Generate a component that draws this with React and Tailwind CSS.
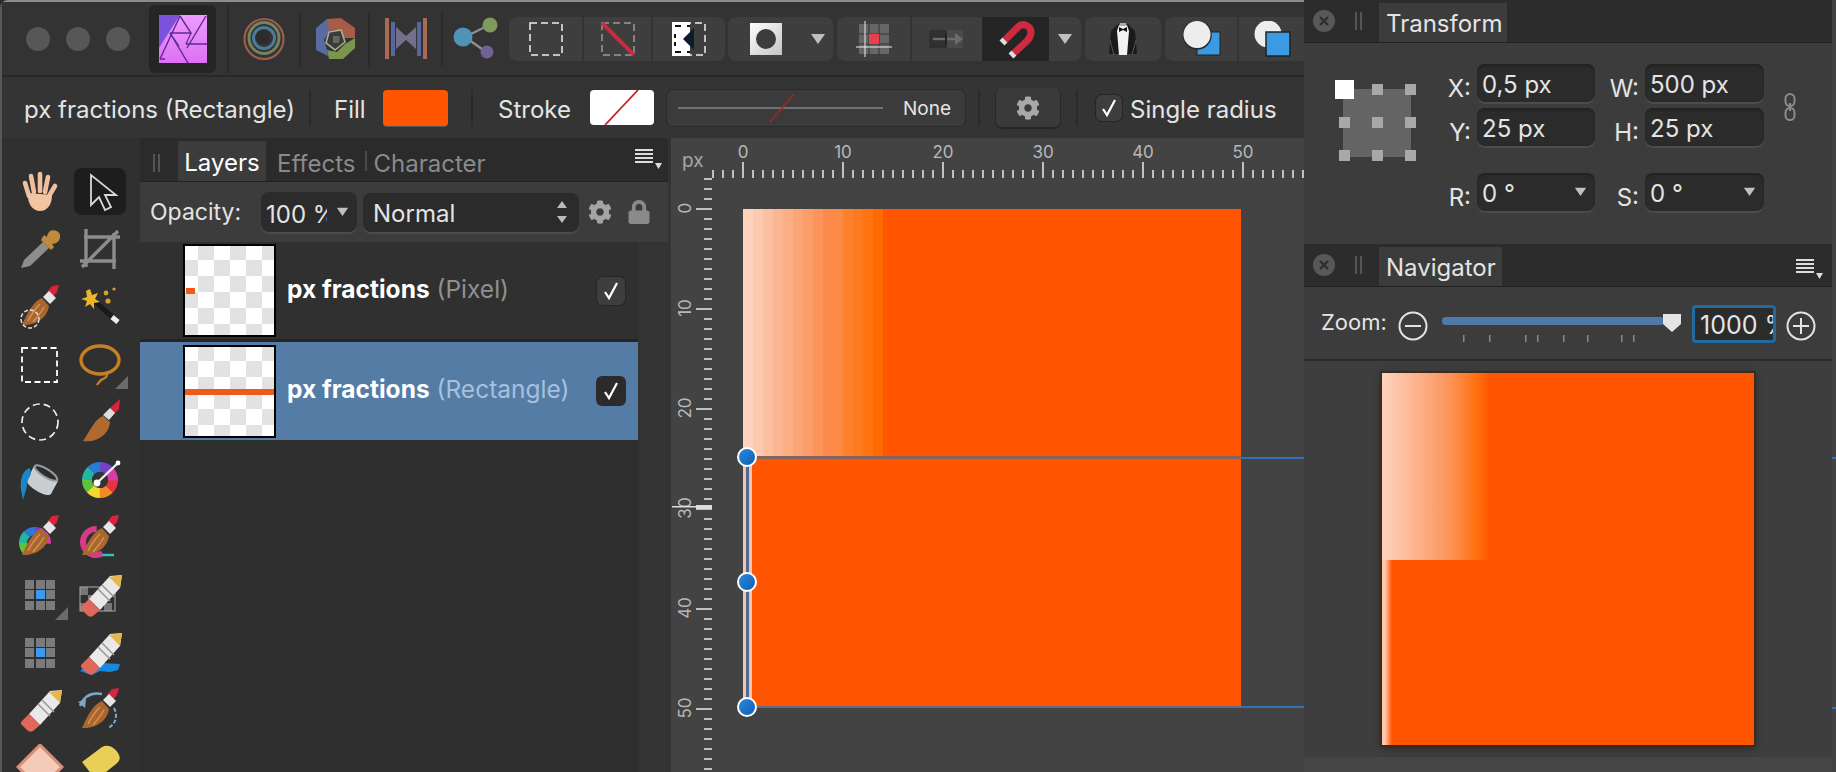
import { FaCog, FaLock } from "react-icons/fa";

const stripes = [
  "bg-[#fdd3bd]", "bg-[#fdcab0]", "bg-[#fcc0a0]", "bg-[#fcb591]", "bg-[#fcae85]",
  "bg-[#fca678]", "bg-[#fd9d69]", "bg-[#fd9459]", "bg-[#fd8a4c]", "bg-[#fd8a45]",
  "bg-[#fe7f2c]", "bg-[#ff7a1f]", "bg-[#ff7310]", "bg-[#ff6a00]",
];
const wheel = ["#e8343c", "#f08a24", "#f2d92e", "#5fc23c", "#23b5a0", "#2a78d8", "#7a3fc8", "#d63ca8"];

function Tri({ className = "", w = 16 }) {
  return (
    <svg width={w} height={w * 0.75} viewBox="0 0 16 12" className={className}>
      <path d="M1 1h14L8 11z" fill="#c0c0c0" />
    </svg>
  );
}

function Sep({ className = "" }) {
  return <div className={"w-[2px] bg-[#2a2a2a] " + className} />;
}

function Check() {
  return (
    <svg width="18" height="20" viewBox="0 0 18 20">
      <path d="M3 11l4 6L15 2" fill="none" stroke="#fff" strokeWidth="2.2" />
    </svg>
  );
}

function MenuIcon() {
  return (
    <svg width="27" height="22" viewBox="0 0 27 22">
      <path d="M0 2h18M0 6h18M0 10h18M0 14h18" stroke="#ddd" strokeWidth="1.8" />
      <path d="M20 15h7l-3.5 6z" fill="#ddd" />
    </svg>
  );
}

function CloseDot() {
  return (
    <svg width="22" height="22" viewBox="0 0 22 22">
      <circle cx="11" cy="11" r="11" fill="#585858" />
      <path d="M7 7l8 8M15 7l-8 8" stroke="#2e2e2e" strokeWidth="2.4" />
    </svg>
  );
}

function Grip() {
  return (
    <svg width="8" height="18" viewBox="0 0 8 18">
      <path d="M1 0v18M6 0v18" stroke="#555" strokeWidth="2" />
    </svg>
  );
}

// ---- toolbar icons ----
function AffinityLogo() {
  return (
    <svg width="48" height="48" viewBox="0 0 48 48">
      <defs>
        <linearGradient id="aff" x1="0" y1="0" x2="0" y2="1">
          <stop offset="0" stopColor="#ef9bff" />
          <stop offset="1" stopColor="#dd70f2" />
        </linearGradient>
      </defs>
      <rect width="48" height="48" fill="url(#aff)" />
      <path d="M0 0h21L0 33z" fill="#7b52dc" />
      <path d="M21 1L1 44M21 1l11 17H11M47 1L28 33M27 29h21M11 18l18 30M1 44h5" fill="none" stroke="#5d2a96" strokeWidth="1.4" />
      <path d="M32 18l-5 11M11 18l9 13" fill="none" stroke="#5d2a96" strokeWidth="1.2" />
    </svg>
  );
}

function RingsIcon() {
  return (
    <svg width="44" height="44" viewBox="0 0 44 44" fill="none">
      <ellipse cx="22" cy="22" rx="19.5" ry="20" stroke="#9c5c48" strokeWidth="2.2" />
      <ellipse cx="22" cy="21" rx="15" ry="15.5" stroke="#75845e" strokeWidth="3" />
      <circle cx="22" cy="21" r="10.5" stroke="#4a7c9a" strokeWidth="3" />
      <circle cx="21" cy="20" r="7" fill="#2c2c2c" />
    </svg>
  );
}

function HexIcon() {
  return (
    <svg width="44" height="44" viewBox="0 0 44 44">
      <path d="M14 2l14-1 14 10v10l-12 0-8-8-10 2z" fill="#a85c48" />
      <path d="M3 11l11-9 2 13-5 8 3 10 1 6-12-6z" fill="#586ca2" />
      <path d="M42 21v10L30 42 16 42l-2-9 10 2 8-8z" fill="#7a954e" />
      <path d="M16 15l12-2 4 12-10 8-9-7z" fill="#3a3a3a" stroke="#a9ad92" strokeWidth="1.6" />
      <path d="M20 19l7 0-1 7-6 0z" fill="#606a60" />
    </svg>
  );
}

function PersonaIcon() {
  return (
    <svg width="44" height="42" viewBox="0 0 44 42">
      <rect x="1" y="0" width="4" height="41" fill="#a86a54" />
      <rect x="7" y="4" width="4" height="34" fill="#56669e" />
      <path d="M12 9l10 9 10-9v22l-10-9-10 9z" fill="#72708a" />
      <rect x="33" y="4" width="4" height="34" fill="#56669e" />
      <rect x="39" y="0" width="4" height="41" fill="#a86a54" />
    </svg>
  );
}

function ShareIcon() {
  return (
    <svg width="46" height="44" viewBox="0 0 46 44">
      <path d="M12 20L36 8M12 20l24 17" stroke="#8f8f8f" strokeWidth="2.4" />
      <circle cx="10" cy="20" r="9.5" fill="#4f94b8" />
      <circle cx="37" cy="8" r="7.5" fill="#7f9a5c" />
      <circle cx="34" cy="35" r="6.5" fill="#6f6296" />
    </svg>
  );
}

function Marquee() {
  return (
    <svg width="34" height="34" viewBox="0 0 34 34">
      <rect x="1" y="1" width="32" height="32" fill="none" stroke="#eee" strokeWidth="1.5" strokeDasharray="7 4" />
    </svg>
  );
}

function MarqueeStroke() {
  return (
    <svg width="34" height="34" viewBox="0 0 34 34">
      <rect x="1" y="1" width="32" height="32" fill="none" stroke="#9a9a9a" strokeWidth="1.5" strokeDasharray="7 4" />
      <path d="M1 1l32 32" stroke="#d0283e" strokeWidth="4" />
    </svg>
  );
}

function MarqueeMask() {
  return (
    <svg width="34" height="34" viewBox="0 0 34 34">
      <rect x="1" y="1" width="32" height="32" fill="none" stroke="#eee" strokeWidth="1.5" strokeDasharray="7 4" />
      <path d="M0 0h18v34H0z" fill="#fff" />
      <path d="M22 6L11 17l11 11z" fill="#0e1a30" />
      <path d="M3 4h6M3 30h6M15 4h3M15 30h3M3 12v4M3 20v4" stroke="#111" strokeWidth="2" />
    </svg>
  );
}

function HoleIcon() {
  return <div className="flex h-[32px] w-[32px] items-center justify-center bg-[linear-gradient(135deg,#fff,#c4c4c4)]"><div className="h-[20px] w-[20px] rounded-full bg-[#3c3c3c]" /></div>;
}

function SnapGrid() {
  return (
    <svg width="36" height="36" viewBox="0 0 36 36">
      <path d="M3 3h30v30H3z" fill="#666" />
      <path d="M13 3v30M23 3v30M3 13h30M3 23h30" stroke="#444" strokeWidth="1.5" />
      <rect x="13" y="13" width="10" height="10" fill="#e8404a" />
      <path d="M9 0v36M0 26h36" stroke="#eee" strokeWidth="1" />
    </svg>
  );
}

function ArrowBox() {
  return (
    <svg width="36" height="18" viewBox="0 0 36 18">
      <rect width="18" height="18" fill="#303030" />
      <rect x="18" width="16" height="18" fill="#4a4a4a" />
      <path d="M4 9h24" stroke="#6c6c6c" strokeWidth="2.4" />
      <path d="M26 3l8 6-8 6z" fill="#6c6c6c" />
      <path d="M17 3v12" stroke="#222" strokeWidth="2" />
    </svg>
  );
}

function Magnet() {
  return (
    <svg width="67" height="44" viewBox="0 0 67 44" fill="none">
      <path d="M23 23L36 10C41 5 49 9 49 15C49 19 47 22 45 24L32 36" stroke="#cf2a40" strokeWidth="7" />
      <path d="M20 26l3-3M29 39l3-3" stroke="#ddd" strokeWidth="7" />
    </svg>
  );
}

function Tux() {
  return (
    <svg width="30" height="34" viewBox="0 0 30 34">
      <path d="M10 2L3 9 1 32h28L27 9 20 2z" fill="#1a1a1a" />
      <path d="M11 3h8l2 6-2 24h-8L9 9z" fill="#f2f2f2" />
      <path d="M11 5l4 2 4-2v5l-4-2-4 2z" fill="#111" />
      <path d="M12 1h6l1 3h-8z" fill="#aaa" />
      <path d="M2 18l4 15M28 18l-4 15" stroke="#555" strokeWidth="1" />
    </svg>
  );
}

function ShapeBehind() {
  return (
    <svg width="46" height="36" viewBox="0 0 46 36">
      <rect x="14" y="11" width="23" height="23" fill="#3a9ae2" stroke="#222" strokeWidth="1" />
      <circle cx="14" cy="14" r="14" fill="none" stroke="#2a2a2a" strokeWidth="1.5" />
      <circle cx="14" cy="13.5" r="13.5" fill="#ededed" />
    </svg>
  );
}

function ShapeFront() {
  return (
    <svg width="46" height="36" viewBox="0 0 46 36">
      <circle cx="14" cy="13" r="13.5" fill="#ededed" />
      <rect x="12" y="11" width="24" height="24" fill="#3a9ae2" stroke="#222" strokeWidth="1.5" />
    </svg>
  );
}

// ---- tool icons, all drawn on a 48 box ----
function Bristles({ shade = "#a9662f" }) {
  return (
    <>
      <path d="M36 3l7-1-2 7-5 6-5-6z" fill="#d8243c" />
      <path d="M27 14l6-6 7 7-6 6z" fill="#e6e6e6" />
      <path d="M26 15C18 18 12 28 6 42C18 43 31 36 33 23z" fill={shade} />
      <path d="M24 21C19 26 15 32 12 38M28 24C25 30 20 35 17 39" stroke="#d8954f" strokeWidth="1.4" fill="none" />
    </>
  );
}

function Ico({ children }) {
  return <svg width="48" height="48" viewBox="0 0 48 48" fill="none">{children}</svg>;
}

function WheelArc({ r, width, cx = 24, cy = 24, skip = 0 }) {
  const c = 2 * Math.PI * r;
  const seg = c / wheel.length;
  return wheel.slice(skip).map((col, i) => (
    <circle key={col} cx={cx} cy={cy} r={r} stroke={col} strokeWidth={width} strokeDasharray={`${seg + 0.6} ${c - seg - 0.6}`} strokeDashoffset={-(i + skip) * seg} />
  ));
}

function ToolGrid() {
  const cells = [0, 1, 2, 3, 4, 5, 6, 7, 8];
  return (
    <div className="grid grid-cols-3 gap-[1.5px]">
      {cells.map((c) => <div key={c} className={c === 4 ? "h-[9px] w-[9px] bg-[#3a9af0]" : "h-[9px] w-[9px] bg-[#7a7a7a]"} />)}
    </div>
  );
}

function Eraser() {
  return (
    <>
      <path d="M13 28L34 5l12-1-2 13-20 22z" fill="#e9e9e9" />
      <path d="M33 6l13-2-2 13z" fill="#e8b64c" />
      <path d="M22 18l12 12M26 14l12 12" stroke="#9a9a9a" strokeWidth="1.6" />
      <path d="M5 36l8-8 11 11-7 6c-2 1-4 1-6-1l-6-6z" fill="#e0685a" />
    </>
  );
}

const tools = [
  { k: "hand", n: <Ico><path d="M13 28L9 15M18 24l-3-16M24 23V6M29 24l3-15M33 28l6-10" stroke="#f0c09e" strokeWidth="4.6" strokeLinecap="round" /><path d="M12 25l24 2c0 10-5 16-12 16s-13-7-12-18z" fill="#f3c4a2" /></Ico> },
  { k: "move", sel: true, n: <Ico><path d="M15 7v30l8-8 6 13 6-3-6-12h11z" fill="#1c1c1c" stroke="#d8d8d8" strokeWidth="1.8" /></Ico> },
  { k: "pick", n: <Ico><path d="M5 43l3-8 19-18 6 6-19 18z" fill="#8d8d8d" /><path d="M25 15l10 10 3-3-2-3c5 0 9-4 8-9-1-4-6-6-10-4-2 2-3 4-3 6l-3-2z" fill="#c08a3c" /></Ico> },
  { k: "crop", n: <Ico><path d="M10 4v38M4 36h36M38 44V8M44 12H8M6 42L42 6" stroke="#8c8c8c" strokeWidth="3.4" /></Ico> },
  { k: "b1", n: <Ico><Bristles /><circle cx="14" cy="36" r="9" stroke="#ddd" strokeWidth="1.5" strokeDasharray="4 2" /></Ico> },
  { k: "wand", n: <Ico><path d="M17 17l24 21" stroke="#1a1a1a" strokeWidth="5" /><path d="M36 34l6 5" stroke="#eee" strokeWidth="5" /><path d="M14 6l2 6 6-2-3 6 5 3-6 1 0 6-4-5-5 3 2-6-6-2 6-2-1-6z" fill="#f0b428" /><circle cx="30" cy="10" r="2.4" fill="#d8a030" /><circle cx="38" cy="6" r="1.6" fill="#d8a030" /><circle cx="32" cy="18" r="2.6" fill="#d8a030" /></Ico> },
  { k: "rect", n: <Ico><rect x="6" y="7" width="35" height="34" stroke="#fff" strokeWidth="1.8" strokeDasharray="6 3.5" /></Ico> },
  { k: "lasso", tri: true, n: <Ico><ellipse cx="24" cy="19" rx="19" ry="14" stroke="#c77f24" strokeWidth="3.4" /><path d="M31 32c1 6-5 5-7 8-1 2-2 2-3 4" stroke="#c77f24" strokeWidth="2.4" /></Ico> },
  { k: "oval", n: <Ico><circle cx="24" cy="24" r="18" stroke="#eee" strokeWidth="1.7" strokeDasharray="7 4" /></Ico> },
  { k: "b2", n: <Ico><path d="M34 10l10-9-1 10-8 8z" fill="#d8243c" /><path d="M27 17l7-7 5 5-6 7z" fill="#ddd" /><path d="M27 18c-8 3-12 13-20 25 13 2 26-6 27-19z" fill="#b06a30" /></Ico> },
  { k: "fill", n: <Ico><path d="M18 10l24 15-7 13c-3 5-26-8-24-14z" fill="#c8ced2" /><ellipse cx="30" cy="17" rx="4" ry="13" transform="rotate(-58 30 17)" fill="#2c2c2c" stroke="#999" strokeWidth="2" /><path d="M14 12C6 14 4 24 5 34l2 10 3-10 2-10 3-6z" fill="#1a86c8" /></Ico> },
  { k: "wheel", n: <Ico><WheelArc r={13} width={10} /><circle cx="24" cy="24" r="8" fill="#333" /><path d="M22 26L42 7" stroke="#eee" strokeWidth="2.4" /><circle cx="21" cy="27" r="3.4" fill="#fff" /><circle cx="42" cy="7" r="2.4" fill="#fff" /></Ico> },
  { k: "cb1", n: <Ico><WheelArc r={12} width={8} cx={19} cy={30} skip={3} /><Bristles /></Ico> },
  { k: "cb2", n: <Ico><circle cx="20" cy="29" r="13" stroke="#d83a8a" strokeWidth="6" strokeDasharray="48 40" transform="rotate(60 20 29)" /><path d="M26 42h12" stroke="#35c0c8" strokeWidth="2.4" /><Bristles /></Ico> },
  { k: "g1", tri: true, tri2: true, n: <ToolGrid /> },
  { k: "e1", n: <Ico><path d="M4 16h8v8H4zM20 24h8v8h-8zM4 32h8v8H4zM12 24h8v8h-8zM28 32h8v8h-8z" fill="#777" /><rect x="4" y="16" width="35" height="24" stroke="#aaa" strokeWidth="1" /><Eraser /></Ico> },
  { k: "g2", n: <ToolGrid /> },
  { k: "e2", n: <Ico><path d="M4 42l6-6 8 1 8-3 18 1-2 6-8 2-10-1-8 4z" fill="#168ae0" /><Eraser /></Ico> },
  { k: "e3", n: <Ico><Eraser /></Ico> },
  { k: "b3", n: <Ico><path d="M4 20C8 10 16 6 26 8" stroke="#7fa6c8" strokeWidth="2.4" /><path d="M2 16l8-3-1 9z" fill="#7fa6c8" /><path d="M38 22c4 8 2 16-6 20" stroke="#7fa6c8" strokeWidth="2" strokeDasharray="4 2" /><Bristles /></Ico> },
  { k: "dia", n: <Ico><path d="M24 1L46 23 24 45 2 23z" fill="#f3cbb8" stroke="#d89078" strokeWidth="3" /></Ico> },
  { k: "sp", n: <Ico><path d="M6 18L26 3c6-3 12 0 16 6 3 5 2 8-2 11L20 36z" fill="#e8cf58" /></Ico> },
];

function ToolCell({ t }) {
  return (
    <div className="relative flex h-[57.6px] w-[60px] items-center justify-center">
      {t.sel && <div className="absolute left-[4px] top-[5px] h-[47px] w-[52px] rounded-lg bg-[#1d1d1d]" />}
      <div className="relative">{t.n}</div>
      {t.tri && <div className="absolute bottom-[4px] right-[2px] h-0 w-0 border-b-[13px] border-l-[13px] border-b-[#6b6b6b] border-l-transparent" />}
    </div>
  );
}

// ---- small form bits ----
function Field({ children, className = "" }) {
  return (
    <div className={"flex h-[38px] items-center overflow-hidden whitespace-nowrap rounded-lg bg-[#2b2b2b] pl-[5px] shadow-[0_2px_0_#4c4c4c,inset_0_2px_2px_#222] " + className}>
      {children}
    </div>
  );
}

function TransformRow({ a, av, b, bv, tri }) {
  return (
    <div className="flex h-[38px] items-start">
      <span className="mt-[10px] w-[30px] text-right leading-[30px]">{a}</span>
      <Field className="ml-[6px] w-[118px] justify-between pr-[8px]"><span className="pt-[3px]">{av}</span>{tri && <Tri w={13} />}</Field>
      <span className="mt-[10px] w-[44px] text-right leading-[30px]">{b}</span>
      <Field className="ml-[6px] w-[119px] justify-between pr-[8px]"><span className="pt-[3px]">{bv}</span>{tri && <Tri w={13} />}</Field>
    </div>
  );
}

function PanelHead({ title, tabW, menu }) {
  return (
    <div className="flex h-[43px] shrink-0 items-end border-b border-[#222] bg-[#2c2c2c]">
      <div className="mb-[10px] ml-[9px]"><CloseDot /></div>
      <div className="mb-[12px] ml-[20px]"><Grip /></div>
      <div className={"ml-[16px] flex h-[39px] items-center bg-[#3c3c3c] pl-[7px] pt-[3px] " + tabW}>{title}</div>
      {menu && <div className="mb-[6px] ml-auto mr-[9px]"><MenuIcon /></div>}
    </div>
  );
}

function LayerRow({ name, kind, kindCls, selected, mark }) {
  return (
    <div className={selected ? "flex h-[98px] items-center bg-[#557ca5] pl-[43px]" : "flex h-[97px] items-center bg-[#303030] pl-[43px]"}>
      <div className="h-[93px] w-[93px] border-2 border-black bg-[#fff]">
        <div className="relative h-full w-full bg-[repeating-conic-gradient(#e2e2e2_0_25%,#fff_0_50%)] bg-[length:32px_32px] bg-[position:-3px_-2px]">
          {mark}
        </div>
      </div>
      <div className={selected ? "mb-[4px] ml-[11px] whitespace-nowrap text-[24.5px]" : "mb-[2px] ml-[11px] whitespace-nowrap text-[24.5px]"}>
        <span className="font-bold text-white">{name}</span> <span className={kindCls}>{kind}</span>
      </div>
      <div className={selected ? "ml-auto mr-[12px] flex h-[30px] w-[30px] items-center justify-center rounded-md bg-[#2b2b2b]" : "ml-auto mr-[13px] flex h-[28px] w-[28px] items-center justify-center rounded-md bg-[#3e3e3e] shadow-[0_0_0_1px_#262626]"}>
        <Check />
      </div>
    </div>
  );
}

const hTicks = Array.from({ length: 60 }, (_, i) => i - 3);
const vTicks = Array.from({ length: 60 }, (_, i) => i - 3);

export default function App() {
  return (
    <div className="flex h-[772px] w-[1836px] overflow-hidden bg-[#2a2a2a] font-['Inter',sans-serif] text-[24px] text-[#e4e4e4]">
      {/* main window side */}
      <div className="flex h-full w-[1304px] flex-col rounded-tl-lg border-l-2 border-t-2 border-l-[#585858] border-t-[#8c8c8c]">
        {/* top toolbar */}
        <div className="flex h-[75px] shrink-0 items-center border-b-2 border-[#282828] bg-[#333]">
          <div className="ml-[24px] flex gap-[16px]">
            <div className="h-[24px] w-[24px] rounded-full bg-[#575757]" />
            <div className="h-[24px] w-[24px] rounded-full bg-[#575757]" />
            <div className="h-[24px] w-[24px] rounded-full bg-[#575757]" />
          </div>
          <div className="ml-[19px] flex h-[68px] w-[67px] items-center justify-center rounded-md bg-[#252525]"><AffinityLogo /></div>
          <Sep className="ml-[11px] h-[68px]" />
          <div className="flex h-[58px] w-[70px] items-center justify-center"><RingsIcon /></div>
          <Sep className="h-[54px]" />
          <div className="flex h-[58px] w-[67px] items-center justify-center"><HexIcon /></div>
          <Sep className="h-[54px]" />
          <div className="flex h-[58px] w-[71px] items-center justify-center"><PersonaIcon /></div>
          <Sep className="h-[54px]" />
          <div className="flex h-[58px] w-[66px] items-center justify-center"><ShareIcon /></div>
          <div className="flex h-[44px] w-[216px] divide-x-2 divide-[#333] rounded-lg bg-[#3e3e3e]">
            <div className="flex w-[75px] items-center justify-center"><Marquee /></div>
            <div className="flex w-[69px] items-center justify-center"><MarqueeStroke /></div>
            <div className="flex w-[72px] items-center justify-center"><MarqueeMask /></div>
          </div>
          <div className="ml-[3px] flex h-[44px] w-[105px] items-center rounded-lg bg-[#3e3e3e] pl-[22px]">
            <HoleIcon />
            <Tri className="ml-[28px]" />
          </div>
          <div className="ml-[4px] flex h-[44px] w-[244px] rounded-lg bg-[#3e3e3e]">
            <div className="flex w-[75px] items-center justify-center border-r-2 border-[#333]"><SnapGrid /></div>
            <div className="flex w-[70px] items-center justify-center"><ArrowBox /></div>
            <div className="w-[67px] bg-[#252525]"><Magnet /></div>
            <div className="flex w-[32px] items-center justify-center"><Tri /></div>
          </div>
          <div className="ml-[4px] flex h-[44px] w-[76px] items-center justify-center rounded-lg bg-[#3e3e3e]"><Tux /></div>
          <div className="ml-[4px] flex h-[44px] w-[139px] rounded-l-lg bg-[#3e3e3e]">
            <div className="flex w-[74px] items-center justify-center border-r-2 border-[#333] pl-[10px]"><ShapeBehind /></div>
            <div className="flex w-[65px] items-center pl-[15px]"><ShapeFront /></div>
          </div>
        </div>

        {/* context bar */}
        <div className="flex h-[61px] shrink-0 items-center whitespace-nowrap bg-[#343434]">
          <span className="ml-[22px] mt-[4px] w-[269px]">px fractions (Rectangle)</span>
          <Sep className="ml-[16px] h-[36px]" />
          <span className="ml-[23px] mt-[4px] w-[30px]">Fill</span>
          <div className="ml-[19px] h-[36px] w-[65px] rounded-sm bg-[#ff5500] shadow-[0_1px_0_#555]" />
          <Sep className="ml-[23px] h-[36px]" />
          <span className="ml-[25px] mt-[4px] w-[72px]">Stroke</span>
          <div className="ml-[20px] h-[35px] w-[64px] rounded-sm bg-white">
            <svg width="64" height="35" viewBox="0 0 64 35"><path d="M15 35L48 0" stroke="#c8202a" strokeWidth="1.8" /></svg>
          </div>
          <div className="relative ml-[13px] flex h-[36px] w-[298px] items-center rounded-md bg-[#3b3b3b] shadow-[0_0_0_1px_#2a2a2a]">
            <svg width="210" height="30" viewBox="0 0 210 30" className="ml-[11px]">
              <path d="M0 15h205" stroke="#aaa" strokeWidth="1.2" />
              <path d="M92 29l24-28" stroke="#9c2a2a" strokeWidth="1.6" />
            </svg>
            <span className="ml-[15px] mt-[3px] text-[19px]">None</span>
          </div>
          <Sep className="ml-[13px] h-[36px]" />
          <div className="ml-[16px] flex h-[39px] w-[64px] items-center justify-center rounded-md bg-[#3a3a3a] shadow-[0_1px_0_1px_#272727]"><FaCog className="text-[24px] text-[#a8a8a8]" /></div>
          <Sep className="ml-[16px] h-[36px]" />
          <div className="ml-[18px] flex h-[26px] w-[26px] items-center justify-center rounded-md bg-[#3e3e3e] shadow-[0_0_0_1px_#252525]"><Check /></div>
          <span className="ml-[8px] mt-[4px]">Single radius</span>
        </div>

        <div className="flex min-h-0 flex-1">
          {/* tools */}
          <div className="w-[138px] shrink-0 overflow-hidden bg-[#303030] pl-[8px] pt-[25px]">
            <div className="grid w-[120px] grid-cols-2">
              {tools.map((t) => <ToolCell key={t.k} t={t} />)}
            </div>
          </div>

          {/* layers */}
          <div className="flex w-[528px] shrink-0 flex-col bg-[#303030]">
            <div className="flex h-[44px] items-end border-b border-[#222] bg-[#2b2b2b]">
              <div className="mb-[9px] ml-[13px]"><Grip /></div>
              <div className="ml-[17px] flex h-[40px] w-[88px] items-center justify-center bg-[#3c3c3c] pt-[3px] text-white">Layers</div>
              <span className="mb-[-1px] ml-[11px] text-[#8a8a8a]">Effects</span>
              <div className="mb-[10px] ml-[9px] h-[20px] w-[2px] bg-[#4a4a4a]" />
              <span className="mb-[-1px] ml-[7px] text-[#8a8a8a]">Character</span>
              <div className="mb-[11px] ml-auto mr-[6px]"><MenuIcon /></div>
            </div>
            <div className="flex h-[60px] items-center bg-[#3c3c3c]">
              <span className="ml-[10px] w-[87px] text-[23px]">Opacity:</span>
              <div className="ml-[24px] flex h-[40px] w-[96px] items-center overflow-hidden whitespace-nowrap rounded-lg bg-[#2b2b2b] pl-[5px] shadow-[0_2px_0_#4c4c4c]">
                <span className="w-[61px] overflow-hidden pt-[5px]">100 %</span>
                <Tri className="ml-[9px]" w={13} />
              </div>
              <div className="ml-[6px] flex h-[39px] w-[216px] items-center justify-between rounded-lg bg-[#2b2b2b] pl-[10px] pr-[11px] shadow-[0_2px_0_#4c4c4c]">
                <span className="pt-[3px]">Normal</span>
                <svg width="12" height="24" viewBox="0 0 12 24"><path d="M6 1l5 7H1zM6 23l5-7H1z" fill="#bbb" /></svg>
              </div>
              <FaCog className="ml-[9px] text-[24px] text-[#a4a4a4]" />
              <FaLock className="ml-[15px] text-[24px] text-[#8a8a8a]" />
            </div>
            <div className="flex min-h-0 flex-1">
              <div className="w-[498px] bg-[#2e2e2e]">
                <LayerRow
                  name="px fractions"
                  kind="(Pixel)"
                  kindCls="text-[#8f8f8f]"
                  mark={<div className="absolute left-[1px] top-[42px] h-[6px] w-[9px] bg-[#ee5a1a]" />}
                />
                <div className="h-[3px] bg-[#252525]" />
                <LayerRow
                  name="px fractions"
                  kind="(Rectangle)"
                  kindCls="text-[#a6c1dd]"
                  selected
                  mark={<div className="absolute left-0 top-[42px] h-[6px] w-full bg-[#ee5a1a]" />}
                />
              </div>
              <div className="flex-1 bg-[#333]" />
            </div>
          </div>

          {/* canvas, a free drawing surface: everything here is placed by coordinate */}
          <div className="relative min-w-0 flex-1 overflow-hidden border-l-[3px] border-[#333] bg-[#434343] text-[17px] text-[#b8b8b8]">
            <span className="absolute left-[11px] top-[9px] text-[19px] text-[#a8a8a8]">px</span>
            {[0, 10, 20, 30, 40, 50].map((n) => (
              <span key={n} className="absolute top-[2px] w-[40px] -translate-x-1/2 text-center" style={{ left: 72 + n * 10 }}>{n}</span>
            ))}
            {[0, 10, 20, 30, 40, 50].map((n) => (
              <span key={n} className="absolute left-[-5px] w-[40px] -translate-y-1/2 -rotate-90 text-center" style={{ top: 70 + n * 10 }}>{n}</span>
            ))}
            <svg width="633" height="634" viewBox="0 0 633 634" className="absolute left-0 top-0">
              {hTicks.map((i) => (
                <rect key={i} x={71 + i * 10} y={i % 10 === 0 ? 24 : 32} width="2" height={i % 10 === 0 ? 16 : 8} fill="#c0c0c0" />
              ))}
              {vTicks.map((i) => (
                <rect key={i} x={i % 10 === 0 ? 25 : 33} y={70 + i * 10} width={i % 10 === 0 ? 16 : 8} height="2" fill="#c0c0c0" />
              ))}
              <rect x="1" y="368" width="24" height="1.5" fill="#ddd" />
              <rect x="25" y="367" width="16" height="4" fill="#ddd" />
            </svg>

            {/* the orange rectangle */}
            <div className="absolute left-[72px] top-[71px] h-[499px] w-[498px] bg-[#ff5500]">
              <div className="flex h-[249px]">
                {stripes.map((s) => <div key={s} className={"h-full w-[10px] " + s} />)}
              </div>
              <div className="h-[250px] w-[9px] bg-[#f9c4a8]" />
            </div>
            {/* selection */}
            <div className="absolute left-[76px] top-[318px] h-[3px] w-[494px] bg-[#86625a]" />
            <div className="absolute left-[570px] top-[319px] h-[2px] w-[70px] bg-[#2f72b4]" />
            <div className="absolute left-[76px] top-[568px] h-[2px] w-[494px] bg-[#5c6e8c]" />
            <div className="absolute left-[570px] top-[568px] h-[2px] w-[70px] bg-[#2f72b4]" />
            <div className="absolute left-[75px] top-[319px] h-[250px] w-[3px] bg-[#4c6a9a]" />
            <div className="absolute left-[66px] top-[309px] h-[20px] w-[20px] rounded-full border-2 border-white bg-[linear-gradient(135deg,#2a8ae0,#0f5fb0)]" />
            <div className="absolute left-[66px] top-[434px] h-[20px] w-[20px] rounded-full border-2 border-white bg-[linear-gradient(135deg,#2a8ae0,#0f5fb0)]" />
            <div className="absolute left-[66px] top-[559px] h-[20px] w-[20px] rounded-full border-2 border-white bg-[linear-gradient(135deg,#2a8ae0,#0f5fb0)]" />
          </div>
        </div>
      </div>

      {/* right studio panels */}
      <div className="flex h-full w-[528px] shrink-0 flex-col bg-[#3c3c3c]">
        <PanelHead title="Transform" tabW="w-[128px]" />
        <div className="flex h-[201px] shrink-0 bg-[#3c3c3c] pt-[21px]">
          <svg width="90" height="90" viewBox="0 0 90 90" className="ml-[31px] mt-[16px] shrink-0">
            <rect x="8" y="9" width="68" height="68" fill="#646464" />
            <rect x="0" y="0" width="19" height="19" fill="#fff" />
            {[[37, 4], [70, 4], [4, 37], [37, 37], [70, 37], [4, 70], [37, 70], [70, 70]].map(([x, y]) => (
              <rect key={x + "-" + y} x={x} y={y} width="11" height="11" fill="#a8a8a8" />
            ))}
          </svg>
          <div className="ml-[16px] flex flex-col">
            <TransformRow a="X:" av="0,5 px" b="W:" bv="500 px" />
            <div className="mt-[6px]"><TransformRow a="Y:" av="25 px" b="H:" bv="25 px" /></div>
            <div className="mt-[27px]"><TransformRow a="R:" av="0 °" b="S:" bv="0 °" tri /></div>
          </div>
          <svg width="12" height="28" viewBox="0 0 12 28" className="ml-[20px] mt-[29px]" fill="none">
            <rect x="1.5" y="1" width="9" height="12" rx="4.5" stroke="#8a8a8a" strokeWidth="2" />
            <rect x="1.5" y="15" width="9" height="12" rx="4.5" stroke="#8a8a8a" strokeWidth="2" />
            <path d="M6 10v8" stroke="#8a8a8a" strokeWidth="2" />
          </svg>
        </div>
        <PanelHead title="Navigator" tabW="w-[123px]" menu />
        <div className="flex h-[74px] shrink-0 items-start border-b-2 border-[#2a2a2a] bg-[#3c3c3c] pt-[19px] text-[22px]">
          <span className="ml-[17px] w-[65px]">Zoom:</span>
          <svg width="30" height="30" viewBox="0 0 30 30" className="ml-[12px] mt-[5px]" fill="none">
            <circle cx="15" cy="15" r="13.5" stroke="#e4e4e4" strokeWidth="2" />
            <path d="M7 15h16" stroke="#e4e4e4" strokeWidth="2" />
          </svg>
          <div className="relative ml-[14px] h-[38px] w-[240px]">
            <div className="mt-[11px] h-[8px] w-[222px] rounded-full bg-[#4f7aa8]" />
            <svg width="20" height="20" viewBox="0 0 20 20" className="absolute left-[220px] top-[7px]">
              <path d="M1 1h18v10l-9 8-9-8z" fill="#e4e4e4" />
            </svg>
            <svg width="200" height="8" viewBox="0 0 200 8" className="mt-[10px]">
              {[21, 47, 83, 95, 121, 145, 179, 191].map((x) => <rect key={x} x={x} y="0" width="1.5" height="7" fill="#888" />)}
            </svg>
          </div>
          <div className="ml-[10px] mt-[-1px] flex h-[38px] w-[84px] items-center overflow-hidden whitespace-nowrap rounded-sm border-[3px] border-[#24699e] bg-[#2b2b2b] pl-[5px] pt-[4px] text-[25px]">1000 %</div>
          <svg width="30" height="30" viewBox="0 0 30 30" className="ml-[10px] mt-[5px]" fill="none">
            <circle cx="15" cy="15" r="13.5" stroke="#e4e4e4" strokeWidth="2" />
            <path d="M7 15h16M15 7v16" stroke="#e4e4e4" strokeWidth="2" />
          </svg>
        </div>
        <div className="flex min-h-0 flex-1 flex-col bg-[#3e3e3e]">
          <div className="ml-[78px] mt-[12px] h-[372px] w-[372px] shrink-0 bg-[#ff5500] shadow-[0_0_0_2px_#3a2a20,0_2px_8px_#222]">
            <div className="h-[187px] w-[108px] bg-[linear-gradient(90deg,#fdd3bd_0%,#fcb591_30%,#fd9459_62%,#ff7010_88%,#ff5500_100%)]" />
            <div className="h-[185px] w-[10px] bg-[linear-gradient(90deg,#fdc8ae_30%,#ff5500_100%)]" />
          </div>
          <div className="mt-[12px] flex-1 bg-[#454545]" />
        </div>
      </div>

      {/* sliver of canvas past the panels */}
      <div className="relative h-full w-[4px] shrink-0 bg-[#434343]">
        <div className="absolute left-0 top-[457px] h-[2px] w-full bg-[#2f72b4]" />
        <div className="absolute left-0 top-[707px] h-[2px] w-full bg-[#2f72b4]" />
      </div>
    </div>
  );
}
